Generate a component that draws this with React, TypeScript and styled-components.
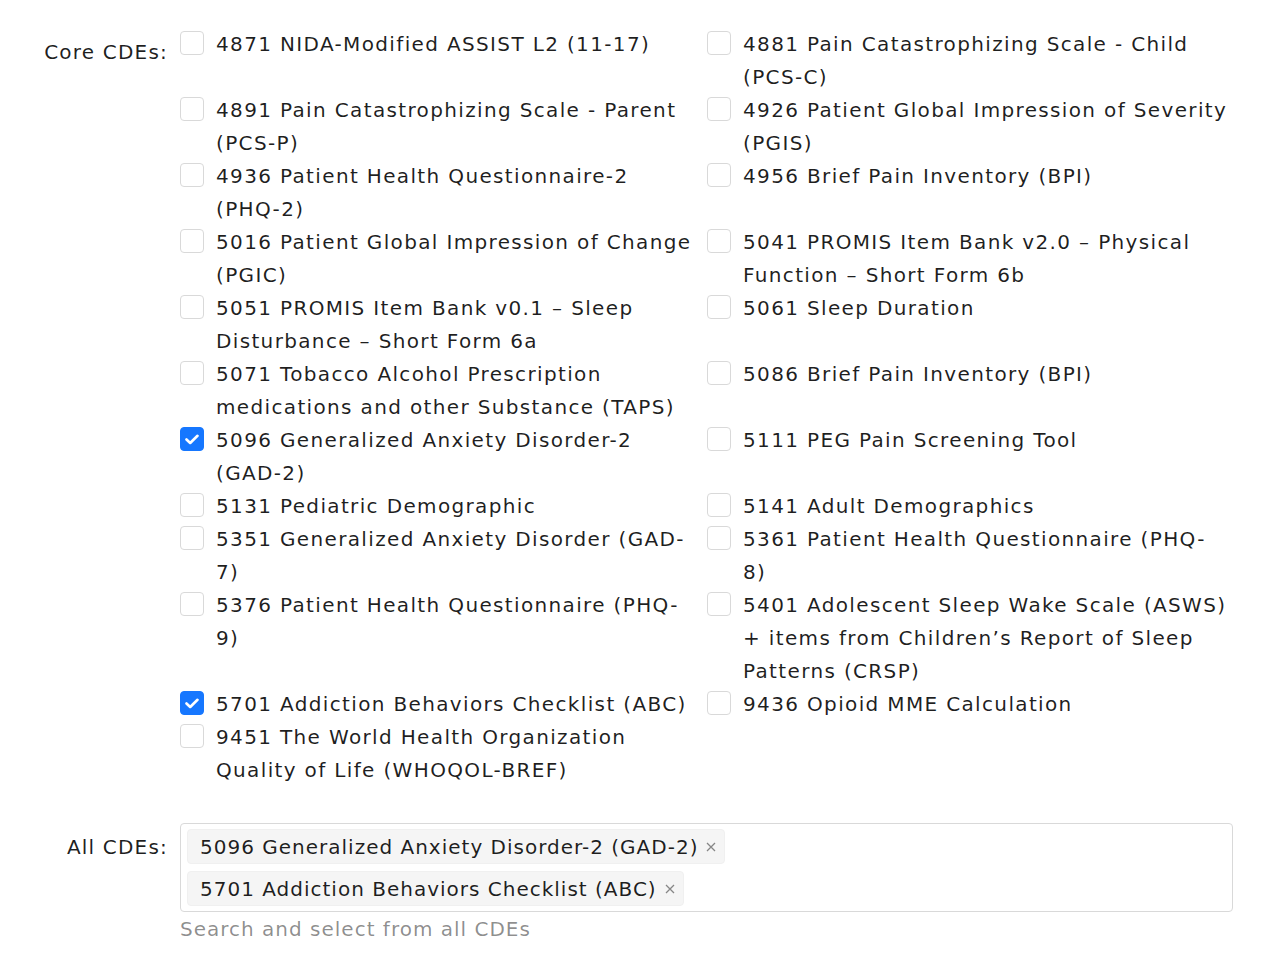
import styled, { createGlobalStyle } from 'styled-components';
import { useState } from 'react';

const Global = createGlobalStyle`
    body {
        margin: 0;
        background: #ffffff;
        font-family: "DejaVu Sans", "Noto Sans", sans-serif;
        color: rgba(0, 0, 0, 0.88);
    }
`

const core = [
    { id: 4871, name: "4871 NIDA-Modified ASSIST L2 (11-17)" },
    { id: 4881, name: "4881 Pain Catastrophizing Scale - Child (PCS-C)" },
    { id: 4891, name: "4891 Pain Catastrophizing Scale - Parent (PCS-P)" },
    { id: 4926, name: "4926 Patient Global Impression of Severity (PGIS)" },
    { id: 4936, name: "4936 Patient Health Questionnaire-2 (PHQ-2)" },
    { id: 4956, name: "4956 Brief Pain Inventory (BPI)" },
    { id: 5016, name: "5016 Patient Global Impression of Change (PGIC)" },
    { id: 5041, name: "5041 PROMIS Item Bank v2.0 – Physical Function – Short Form 6b" },
    { id: 5051, name: "5051 PROMIS Item Bank v0.1 – Sleep Disturbance – Short Form 6a" },
    { id: 5061, name: "5061 Sleep Duration" },
    { id: 5071, name: "5071 Tobacco Alcohol Prescription medications and other Substance (TAPS)" },
    { id: 5086, name: "5086 Brief Pain Inventory (BPI)" },
    { id: 5096, name: "5096 Generalized Anxiety Disorder-2 (GAD-2)" },
    { id: 5111, name: "5111 PEG Pain Screening Tool" },
    { id: 5131, name: "5131 Pediatric Demographic" },
    { id: 5141, name: "5141 Adult Demographics" },
    { id: 5351, name: "5351 Generalized Anxiety Disorder (GAD-7)" },
    { id: 5361, name: "5361 Patient Health Questionnaire (PHQ-8)" },
    { id: 5376, name: "5376 Patient Health Questionnaire (PHQ-9)" },
    { id: 5401, name: "5401 Adolescent Sleep Wake Scale (ASWS) + items from Children’s Report of Sleep Patterns (CRSP)" },
    { id: 5701, name: "5701 Addiction Behaviors Checklist (ABC)" },
    { id: 9436, name: "9436 Opioid MME Calculation" },
    { id: 9451, name: "9451 The World Health Organization Quality of Life (WHOQOL-BREF)" },
]

const App = () => {
    const [picked, setPicked] = useState<number[]>([5096, 5701])

    const toggle = (id: number) => {
        setPicked(picked.includes(id) ? picked.filter((p) => p !== id) : [...picked, id])
    }

    return <Main>
        <Global />
        <FormRow>
            <Label pt={8}>Core CDEs:</Label>
            <Grid>
                {core.map((c) => {
                    const on = picked.includes(c.id)
                    return <Item key={c.id} onClick={() => toggle(c.id)}>
                        <Box on={on}>
                            {on && <svg width="14" height="11" viewBox="0 0 14 11">
                                <path d="M1.5 5.5 L5.2 9 L12.5 1.8" fill="none" stroke="#fff" strokeWidth="2.6" strokeLinecap="round" strokeLinejoin="round" />
                            </svg>}
                        </Box>
                        <ItemText>{c.name}</ItemText>
                    </Item>
                })}
            </Grid>
        </FormRow>

        <FormRow mt={36}>
            <Label pt={8}>All CDEs:</Label>
            <Field>
                <Select>
                    {core.filter((c) => picked.includes(c.id)).map((c) => (
                        <Tag key={c.id}>
                            {c.name}
                            <Close onClick={() => toggle(c.id)}>
                                <svg width="10" height="10" viewBox="0 0 10 10">
                                    <path d="M1 1 L9 9 M9 1 L1 9" stroke="currentColor" strokeWidth="1.3" />
                                </svg>
                            </Close>
                        </Tag>
                    ))}
                </Select>
                <Help>Search and select from all CDEs</Help>
            </Field>
        </FormRow>
    </Main>;
}

export default App;

const Main = styled.div`
    width: 1280px;
    padding: 28px 0 20px 0;
    box-sizing: border-box;
`
const FormRow = styled.div<{ mt?: number }>`
    display: flex;
    align-items: flex-start;
    gap: 12px;
    margin-top: ${({ mt }) => mt || 0}px;
`
const Label = styled.div<{ pt: number }>`
    width: 168px;
    flex-shrink: 0;
    text-align: right;
    font-size: 20px;
    line-height: 33px;
    padding-top: ${({ pt }) => pt}px;
    box-sizing: border-box;
    letter-spacing: 1.2px;
`
const Grid = styled.div`
    width: 1054px;
    display: grid;
    grid-template-columns: 527px 527px;
`
const Item = styled.label`
    display: flex;
    align-items: flex-start;
    gap: 12px;
    padding-right: 6px;
    cursor: pointer;
`
const Box = styled.span<{ on: boolean }>`
    width: 24px;
    height: 24px;
    flex-shrink: 0;
    margin-top: 3px;
    box-sizing: border-box;
    border-radius: 4px;
    border: 1px solid ${({ on }) => (on ? "#1677ff" : "#d9d9d9")};
    background-color: ${({ on }) => (on ? "#1677ff" : "#ffffff")};
    display: flex;
    align-items: center;
    justify-content: center;
`
const ItemText = styled.span`
    font-size: 20px;
    line-height: 33px;
    letter-spacing: 1.35px;
`
const Field = styled.div`
    width: 1053px;
`
const Select = styled.div`
    border: 1px solid #d9d9d9;
    border-radius: 4px;
    padding: 5px 6px 5px 6px;
    display: flex;
    flex-direction: column;
    align-items: flex-start;
    gap: 7px;
`
const Tag = styled.div`
    height: 35px;
    box-sizing: border-box;
    display: flex;
    align-items: center;
    background-color: #f5f5f5;
    border: 1px solid #f0f0f0;
    border-radius: 4px;
    padding: 0 8px 0 12px;
    font-size: 20px;
    letter-spacing: 1px;
`
const Close = styled.span`
    margin-left: 8px;
    color: rgba(0, 0, 0, 0.45);
    display: flex;
    align-items: center;
    cursor: pointer;
`
const Help = styled.div`
    margin-top: 6px;
    font-size: 20px;
    line-height: 22px;
    color: rgba(0, 0, 0, 0.45);
    letter-spacing: 1px;
`
